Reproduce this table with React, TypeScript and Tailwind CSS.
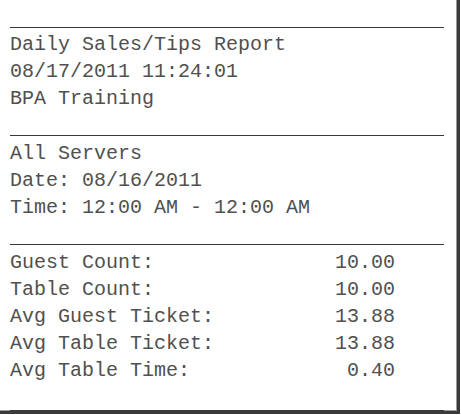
import React from "react";

const Rule = () => <div className="h-px w-[434px] bg-[#3a3a3a]" />;

const Line = ({ children }: { children: React.ReactNode }) => (
  <div className="h-[27px] leading-[27px] whitespace-pre">{children}</div>
);

const Row = ({ label, value }: { label: string; value: string }) => (
  <div className="flex h-[27px] w-[385px] justify-between leading-[27px] whitespace-pre">
    <span>{label}</span>
    <span>{value}</span>
  </div>
);

export default function App() {
  return (
    <div className="h-[415px] w-[461px] bg-white">
      <div
        className="h-[414px] w-[460px] border-b-[3px] border-r-[3px] border-[#3a3a3a] bg-white pl-[10px] pt-[27px] text-[20px] text-[#505050] shadow-[inset_-1px_-1px_0_#9a9a9a]"
        style={{ fontFamily: '"Liberation Mono", "Courier New", monospace' }}
      >
        <Rule />
        <div className="pb-[23px] pt-[3px]">
          <Line>Daily Sales/Tips Report</Line>
          <Line>08/17/2011 11:24:01</Line>
          <Line>BPA Training</Line>
        </div>
        <Rule />
        <div className="pb-[23px] pt-[4px]">
          <Line>All Servers</Line>
          <Line>Date: 08/16/2011</Line>
          <Line>Time: 12:00 AM - 12:00 AM</Line>
        </div>
        <Rule />
        <div className="pb-[26px] pt-[4px]">
          <Row label="Guest Count:" value="10.00" />
          <Row label="Table Count:" value="10.00" />
          <Row label="Avg Guest Ticket:" value="13.88" />
          <Row label="Avg Table Ticket:" value="13.88" />
          <Row label="Avg Table Time:" value="0.40" />
        </div>
        <Rule />
      </div>
    </div>
  );
}
